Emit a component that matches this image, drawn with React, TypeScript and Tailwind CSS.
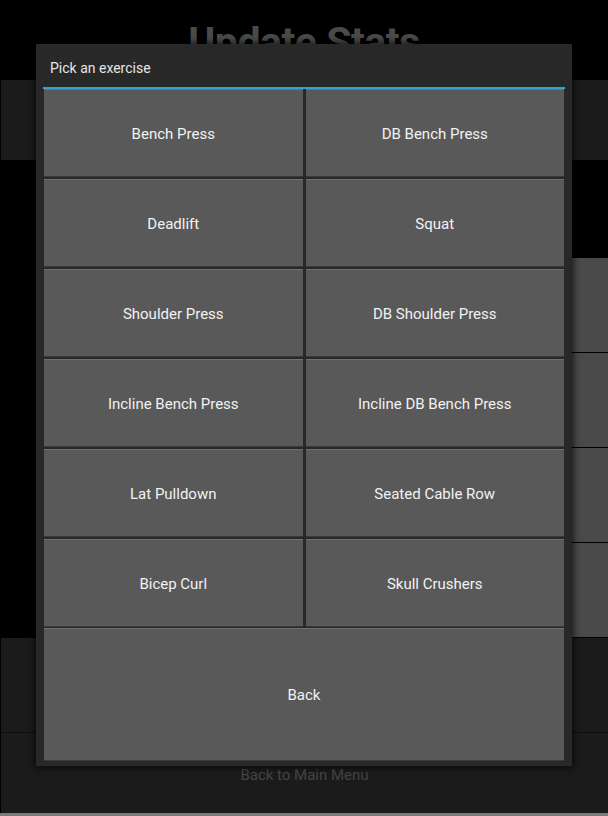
import React from 'react';

const exercises = [
  'Bench Press',
  'DB Bench Press',
  'Deadlift',
  'Squat',
  'Shoulder Press',
  'DB Shoulder Press',
  'Incline Bench Press',
  'Incline DB Bench Press',
  'Lat Pulldown',
  'Seated Cable Row',
  'Bicep Curl',
  'Skull Crushers',
];

function DialogButton({ label, tall }: { label: string; tall?: boolean }) {
  return (
    <button
      className={`flex items-center justify-center pt-[2px] bg-[#595959] border-t border-t-[#707070] border-b border-b-[#3a3a3a] text-[15px] text-[#f2f2f2] ${
        tall ? 'h-[133px]' : 'h-[88px]'
      }`}
    >
      {label}
    </button>
  );
}

export default function App() {
  return (
    <div
      className="relative w-[608px] h-[816px] bg-black overflow-hidden"
      style={{ fontFamily: 'Roboto, "Noto Sans", sans-serif' }}
    >
      {/* page behind the dialog */}
      <div className="flex flex-col h-full">
        <div className="h-[80px] flex items-start justify-center pt-[22px]">
          <h1 className="text-[41px] font-bold text-[#4a4a4a] leading-none tracking-[-0.5px]">Update Stats</h1>
        </div>
        <div className="h-[80px] ml-[1px] bg-[#1b1b1b]" />
        <div className="flex-1 flex justify-end pt-[98px]">
          <div className="w-[300px] flex flex-col gap-[1px]">
            <div className="h-[94px] bg-[#4a4a4a]" />
            <div className="h-[94px] bg-[#4a4a4a]" />
            <div className="h-[94px] bg-[#4a4a4a]" />
            <div className="h-[94px] bg-[#4a4a4a]" />
          </div>
        </div>
        <div className="h-[95px] ml-[1px] bg-[#1b1b1b] border-b border-b-[#0e0e0e]" />
        <div className="h-[80px] ml-[1px] bg-[#1b1b1b] flex items-start justify-center pt-[35px]">
          <span className="text-[15px] text-[#444444] leading-none">Back to Main Menu</span>
        </div>
        <div className="h-[3px] bg-[#7a7a7a]" />
      </div>

      {/* dialog */}
      <div className="absolute left-[36px] top-[44px] w-[536px] h-[722px] bg-[#282828] shadow-[0_0_6px_2px_rgba(0,0,0,0.6)] px-[7px] flex flex-col">
        <div className="h-[43px] flex items-center pt-[5px] pl-[7px] text-[14px] text-[#e6e6e6]">Pick an exercise</div>
        <div className="h-[2px] bg-[#2fa8cc]" />
        <div className="grid grid-cols-2 gap-x-[3px] gap-y-[2px] pb-[1px] px-[1px]">
          {exercises.map((ex) => (
            <DialogButton key={ex} label={ex} />
          ))}
        </div>
        <div className="px-[1px]">
          <div className="flex flex-col">
            <DialogButton label="Back" tall />
          </div>
        </div>
      </div>
    </div>
  );
}
